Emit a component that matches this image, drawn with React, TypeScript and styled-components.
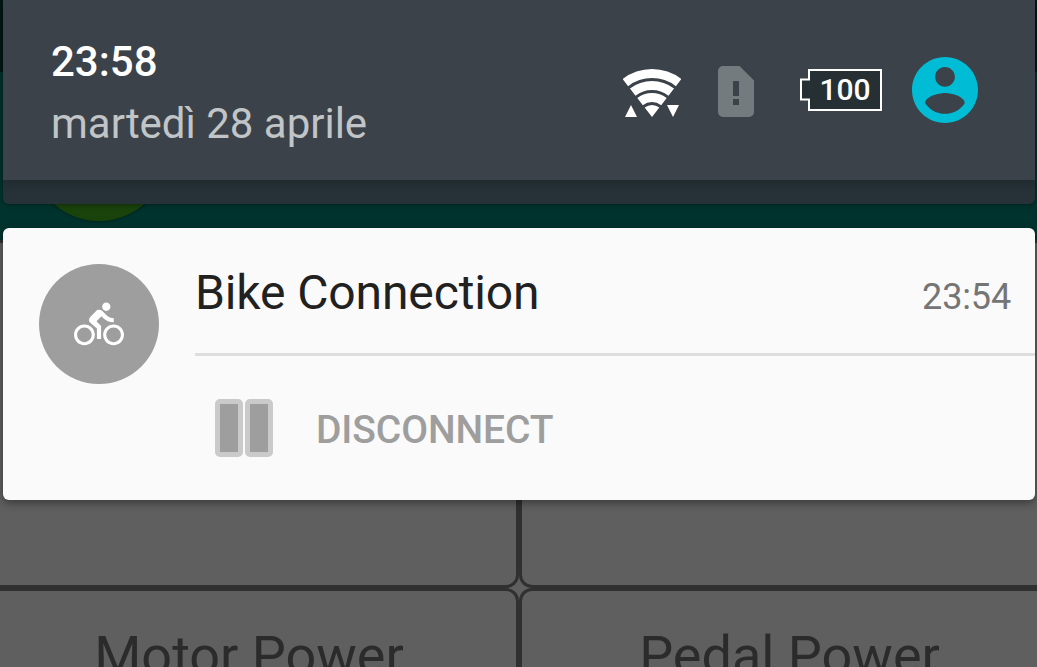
import React from "react";
import styled, { createGlobalStyle } from "styled-components";

const GlobalStyle = createGlobalStyle`
  * { box-sizing: border-box; }
  body { margin: 0; background: #5f5f5f; font-family: Roboto, "Noto Sans", sans-serif; }
`;

const Screen = styled.div`
  position: relative;
  width: 1037px;
  height: 667px;
  overflow: hidden;
  background: #5f5f5f;
`;

const Backdrop = styled.div`
  display: flex;
  flex-direction: column;
`;

const SystemBar = styled.div`
  height: 72px;
  background: #001a17;
`;

const AppBar = styled.div`
  height: 168px;
  padding: 11px 0 0 30px;
  background: #00332e;
`;

const AppLogo = styled.div`
  width: 138px;
  height: 138px;
  border-radius: 50%;
  background: #1a430c;
  box-shadow: 0 1px 3px rgba(0, 0, 0, 0.3);
`;

const Grid = styled.div`
  display: grid;
  grid-template-columns: 519px 518px;
  grid-template-rows: 348px 348px;
`;

const Cell = styled.div<{ $side: "left" | "right" }>`
  border: 3px solid #303030;
  ${(p) =>
    p.$side === "left"
      ? "border-left: 0; border-radius: 0 13px 13px 0; padding: 30px 18px 0 0;"
      : "border-right: 0; border-radius: 13px 0 0 13px; padding: 30px 0 0 20px;"}
  font-size: 54px;
  line-height: 70px;
  text-align: center;
  color: #2b2b2b;
`;

const Shade = styled.div`
  position: absolute;
  inset: 0 2px auto 3px;
  display: flex;
  flex-direction: column;
  gap: 24px;
`;

const Panel = styled.div`
  height: 204px;
  border-radius: 0 0 6px 6px;
  background: #263238;
  box-shadow: 0 1px 5px rgba(0, 0, 0, 0.35);
`;

const Header = styled.header`
  display: flex;
  align-items: flex-start;
  height: 180px;
  padding: 0 57px 0 48px;
  background: #3b4249;
  box-shadow: 0 2px 10px rgba(0, 0, 0, 0.25);
`;

const Clock = styled.div`
  flex: 1;
  padding-top: 37px;
`;

const Time = styled.div`
  font-size: 42px;
  line-height: 49px;
  font-weight: 500;
  color: #fff;
`;

const DateText = styled.div`
  margin-top: 13px;
  font-size: 42px;
  line-height: 49px;
  letter-spacing: -0.02px;
  color: #c2c5c7;
`;

const StatusIcons = styled.div`
  display: flex;
  align-items: center;
  height: 180px;

  svg { display: block; }
`;

const WifiIcon = styled.svg`
  margin: 6px 37px 0 0;
`;

const SimIcon = styled.svg`
  margin: 3px 46px 0 0;
`;

const BatteryIcon = styled.svg`
  margin-right: 30px;
  font: 500 30px Roboto, sans-serif;
`;

const Card = styled.section`
  display: flex;
  height: 272px;
  border-radius: 6px;
  background: #fafafa;
  box-shadow: 0 3px 9px rgba(0, 0, 0, 0.4);
`;

const Avatar = styled.div`
  display: grid;
  place-items: center;
  flex: none;
  width: 120px;
  height: 120px;
  margin: 36px 36px 0;
  border-radius: 50%;
  background: #9e9e9e;
`;

const CardBody = styled.div`
  flex: 1;
`;

const CardTop = styled.div`
  display: flex;
  justify-content: space-between;
  align-items: baseline;
  height: 128px;
  padding: 37px 24px 0 0;
  border-bottom: 3px solid #dedede;
`;

const Title = styled.div`
  font-size: 48px;
  line-height: 56px;
  letter-spacing: -0.12px;
  color: #212121;
`;

const Stamp = styled.div`
  font-size: 36px;
  letter-spacing: -0.15px;
  color: #757575;
`;

const Action = styled.button`
  display: flex;
  align-items: center;
  height: 144px;
  padding: 0 0 0 20px;
  border: 0;
  background: none;
  color: #9e9e9e;
  font: 500 39px Roboto, sans-serif;
  letter-spacing: -0.1px;
`;

const ActionLabel = styled.span`
  padding-top: 4px;
`;

const Pause = styled.span`
  display: flex;
  gap: 2px;
  margin-right: 43px;
`;

const PauseBar = styled.span`
  width: 28px;
  height: 58px;
  border: 5px solid #cacaca;
  border-radius: 5px;
  background: #9e9e9e;
`;

const bands: [number, number][] = [[48, 39], [36, 27], [24, 15]];
const SIN = 0.6115;
const COS = 0.7912;

function wedge(outer: number, inner: number) {
  const at = (r: number, s: number) => `${29 + s * r * SIN} ${48 - r * COS}`;
  return `M${at(outer, -1)}A${outer} ${outer} 0 0 1 ${at(outer, 1)}L${at(inner, 1)}A${inner} ${inner} 0 0 0 ${at(inner, -1)}Z`;
}

export default function App() {
  return (
    <Screen>
      <GlobalStyle />
      <Backdrop>
        <SystemBar />
        <AppBar>
          <AppLogo />
        </AppBar>
        <Grid>
          <Cell $side="left" />
          <Cell $side="right" />
          <Cell $side="left">Motor Power</Cell>
          <Cell $side="right">Pedal Power</Cell>
        </Grid>
      </Backdrop>
      <Shade>
        <Panel>
          <Header>
            <Clock>
              <Time>23:58</Time>
              <DateText>martedì 28 aprile</DateText>
            </Clock>
            <StatusIcons>
              <WifiIcon width="58" height="48" viewBox="0 0 58 48" fill="#fff">
                {bands.map(([o, i]) => <path key={o} d={wedge(o, i)} />)}
                <path d={wedge(12, 0)} />
                <path d="M2 48h12l-6-12zM44 36h12l-6 12z" />
              </WifiIcon>
              <SimIcon width="36" height="51" viewBox="0 0 36 51">
                <path
                  fill="#737b7e"
                  fillRule="evenodd"
                  d="M5 0H21.5L36 14.5V46a5 5 0 0 1-5 5H5a5 5 0 0 1-5-5V5a5 5 0 0 1 5-5ZM15 15v15h6V15ZM15 33v6h6v-6Z"
                />
              </SimIcon>
              <BatteryIcon width="82" height="42" viewBox="0 0 82 42">
                <path d="M9 1H81V41H9V30.500H1V10.500H9Z" fill="#263034" stroke="#fff" strokeWidth="2" />
                <text x="45" y="31" textAnchor="middle" fill="#fff">100</text>
              </BatteryIcon>
              <svg width="66" height="66" viewBox="2 2 20 20" fill="#00bcd4">
                <path d="M12 2C6.480 2 2 6.480 2 12s4.480 10 10 10 10-4.480 10-10S17.520 2 12 2zm0 3c1.660 0 3 1.340 3 3s-1.340 3-3 3-3-1.340-3-3 1.340-3 3-3zm0 14.200c-2.500 0-4.710-1.280-6-3.220.03-1.990 4-3.080 6-3.080 1.990 0 5.970 1.090 6 3.080-1.290 1.940-3.500 3.220-6 3.220z" />
              </svg>
            </StatusIcons>
          </Header>
        </Panel>
        <Card>
          <Avatar>
            <svg width="50" height="50" viewBox="0 -0.2 24 24" fill="#fff">
              <path d="M15.500 5.500c1.100 0 2-.9 2-2s-.9-2-2-2-2 .9-2 2 .9 2 2 2zM5 12c-2.800 0-5 2.200-5 5s2.200 5 5 5 5-2.200 5-5-2.200-5-5-5zm0 8.500c-1.900 0-3.500-1.600-3.500-3.500s1.600-3.500 3.500-3.500 3.500 1.600 3.500 3.500-1.600 3.500-3.500 3.500zm5.800-10l2.400-2.400.8.8c1.300 1.300 3 2.100 5.100 2.100V9c-1.500 0-2.700-.6-3.600-1.500l-1.900-1.900c-.5-.4-1-.6-1.600-.6s-1.100.2-1.400.6L7.800 8.400c-.4.4-.6.9-.6 1.400 0 .6.2 1.100.6 1.400L11 14v5h2v-6.200l-2.200-2.300zM19 12c-2.800 0-5 2.200-5 5s2.200 5 5 5 5-2.200 5-5-2.200-5-5-5zm0 8.500c-1.900 0-3.500-1.600-3.500-3.500s1.600-3.500 3.500-3.500 3.500 1.600 3.500 3.500-1.600 3.500-3.500 3.500z" />
            </svg>
          </Avatar>
          <CardBody>
            <CardTop>
              <Title>Bike Connection</Title>
              <Stamp>23:54</Stamp>
            </CardTop>
            <Action>
              <Pause>
                <PauseBar />
                <PauseBar />
              </Pause>
              <ActionLabel>DISCONNECT</ActionLabel>
            </Action>
          </CardBody>
        </Card>
      </Shade>
    </Screen>
  );
}
